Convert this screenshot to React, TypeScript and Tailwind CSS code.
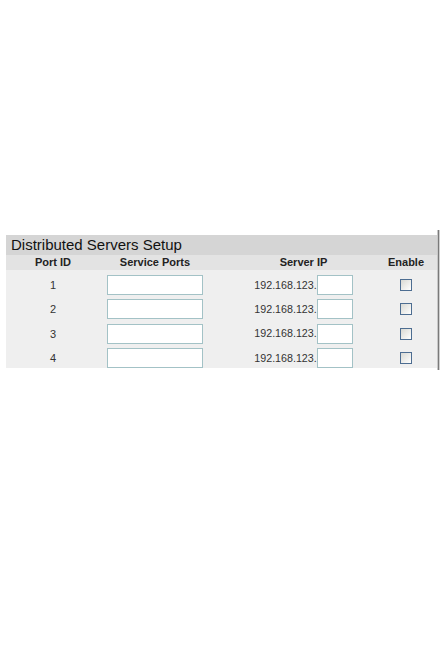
import type React from 'react'

const rows = [1, 2, 3, 4]

const cols = 'grid grid-cols-[94px_110px_165px_62px]'

export default function App(): React.JSX.Element {
	return (
		<div className="min-h-[672px] bg-white pt-[230px] flex font-['Liberation_Sans',Arial,sans-serif]">
			<div className="w-[6px] shrink-0" />
			<div className="w-[431px] shrink-0 pt-[5px]">
				<div className="h-[133px] overflow-hidden">
					{/* title bar */}
					<div className="h-[20px] bg-[#d5d5d5] pl-[5px] text-[15px] leading-[20px] text-[#111]">
						Distributed Servers Setup
					</div>

					{/* column headings */}
					<div className={`${cols} h-[15px] bg-[#e3e3e3] text-[11px] leading-[15px] font-bold text-[#222]`}>
						<div className="text-center">Port ID</div>
						<div className="text-center">Service Ports</div>
						<div className="text-center pl-[22px]">Server IP</div>
						<div className="text-center">Enable</div>
					</div>

					<div className="bg-[#efefef] pt-[3px] h-[98px]">
						{rows.map((id) => (
							<div key={id} className={`${cols} h-[24.33px] items-center text-[#333]`}>
								<div className="text-center text-[11px]">{id}</div>
								<div className="flex justify-center">
									<input
										type="text"
										className="w-[96px] h-[20px] bg-white border border-[#a3c2c6] outline-none"
									/>
								</div>
								<div className="flex items-center justify-center pl-[22px]">
									<span className="text-[10.7px] leading-none">192.168.123.</span>
									<input
										type="text"
										className="w-[36px] h-[20px] bg-white border border-[#a3c2c6] outline-none"
									/>
								</div>
								<div className="flex justify-center">
									<span className="block w-[12px] h-[12px] border border-[#4d6d91] bg-gradient-to-br from-[#d9d9d3] to-white" />
								</div>
							</div>
						))}
					</div>
				</div>
			</div>
			<div className="w-[3px] h-[140px] shrink-0 bg-[#7a7a7a] border-l border-[#c8c8c8] border-r border-r-[#d0d0d0]" />
		</div>
	)
}
